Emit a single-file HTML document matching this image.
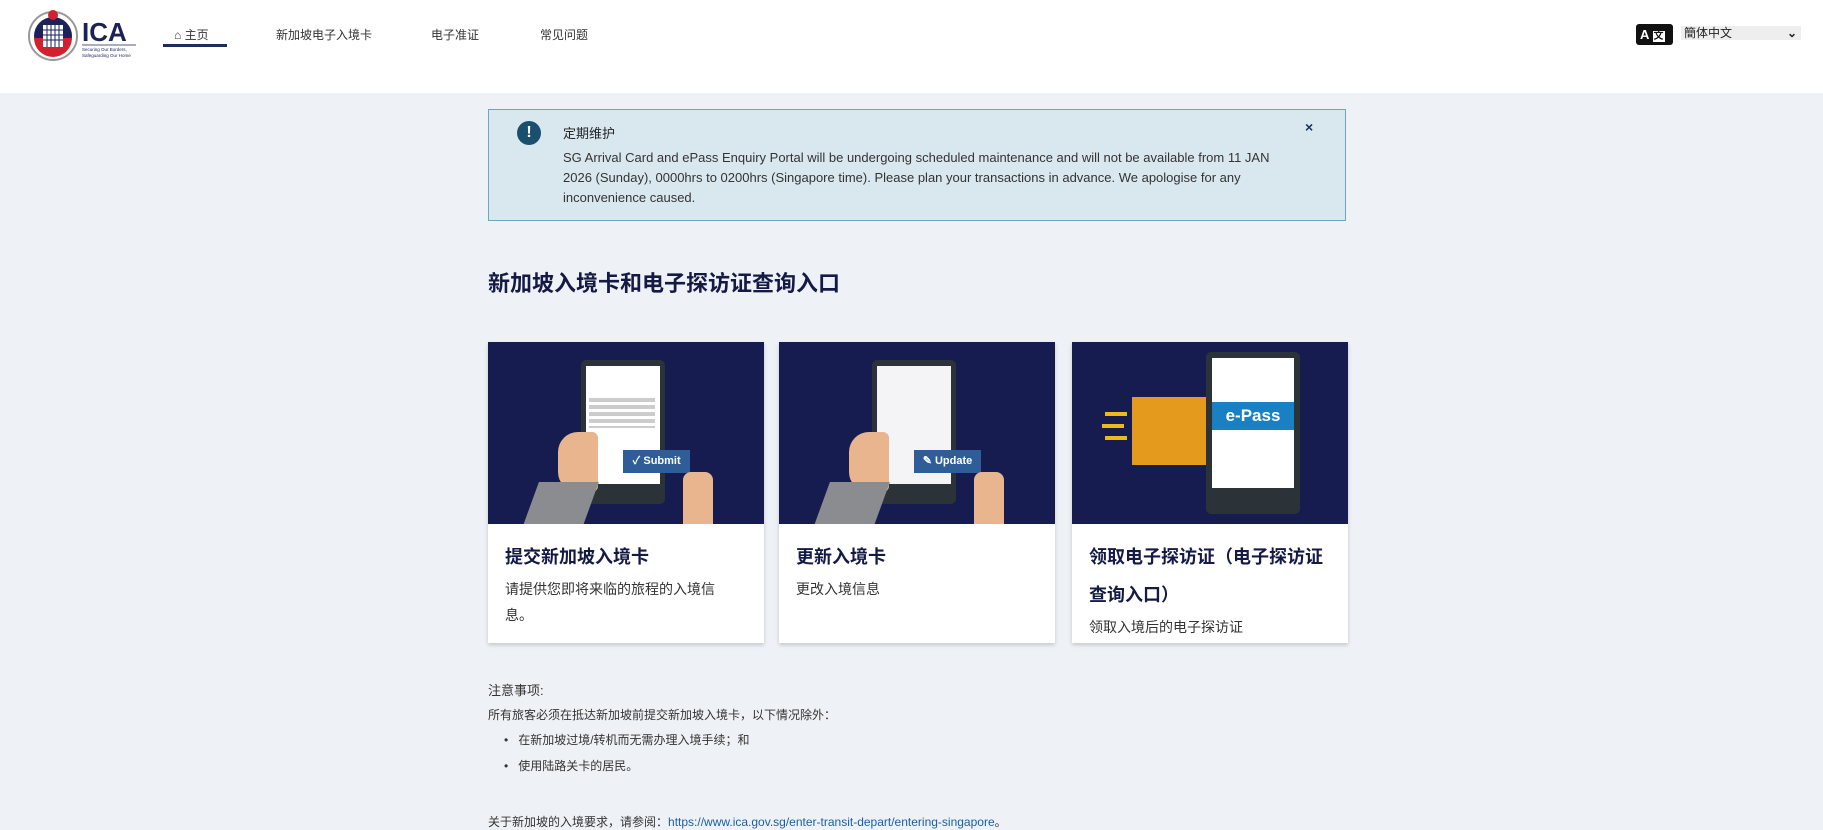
<!DOCTYPE html>
<html><head><meta charset="utf-8"><style>
*{box-sizing:border-box;margin:0;padding:0}
body{width:1823px;height:824px;overflow:hidden;background:#eef2f6;font-family:"Liberation Sans","Noto Sans CJK SC",sans-serif;color:#222;position:relative}
.hdr{position:absolute;left:0;top:0;width:1823px;height:93px;background:#fff}
.a{position:absolute}
.nav{font-size:12px;color:#333;top:26px}
.card{position:absolute;top:342px;width:276px;height:301px;background:#fff;box-shadow:0 2px 4px rgba(0,0,0,.18)}
.img{height:182px;background:#161c4f;position:relative;overflow:hidden}
.ct{font-size:18px;color:#151a45;font-weight:bold;margin:14px 17px 0;line-height:38px}
.cd{font-size:14px;color:#333;margin:0 17px;line-height:26px;width:228px}
.note{font-size:12px;color:#333}
</style></head><body>
<div class="hdr">
 <svg class="a" style="left:26px;top:8px" width="112" height="54" viewBox="0 0 112 54">
  <circle cx="27" cy="28" r="24" fill="#fff" stroke="#999" stroke-width="2"/>
  <circle cx="27" cy="28" r="19" fill="#1b2257"/>
  <path d="M8 30 A19 19 0 0 0 46 30 Z" fill="#d3202e"/>
  <rect x="17" y="17" width="20" height="22" fill="#fff"/>
  <path d="M21 17v22M25 17v22M29 17v22M33 17v22M17 22h20M17 27h20M17 32h20" stroke="#1b2257" stroke-width="1"/>
  <circle cx="27" cy="7" r="5" fill="#d3202e"/>
  <text x="56" y="33" font-family="Liberation Sans" font-weight="bold" font-size="26" fill="#1b2257">ICA</text>
  <line x1="56" y1="37" x2="110" y2="37" stroke="#1b2257" stroke-width=".7"/>
  <text x="56" y="43" font-size="4.5" fill="#1b2257">Securing Our Borders,</text>
  <text x="56" y="49" font-size="4.5" fill="#1b2257">Safeguarding Our Home</text>
 </svg>
 <div class="a nav" style="left:174px">&#8962; 主页</div>
 <div class="a" style="left:163px;top:44px;width:64px;height:3px;background:#1b2f5c"></div>
 <div class="a nav" style="left:276px">新加坡电子入境卡</div>
 <div class="a nav" style="left:431px">电子准证</div>
 <div class="a nav" style="left:540px">常见问题</div>
 <div class="a" style="left:1636px;top:24px;width:37px;height:21px;background:#111;border-radius:3px;color:#fff;font-weight:bold;font-size:13px;line-height:21px;padding-left:4px">A <span style="background:#fff;color:#111;font-size:10px;padding:0 1px">文</span></div>
 <div class="a" style="left:1681px;top:26px;width:120px;height:14px;background:#eee;font-size:12px;line-height:14px;padding-left:3px">簡体中文<span style="position:absolute;right:4px;font-weight:bold">&#8964;</span></div>
</div>

<div class="a" style="left:488px;top:109px;width:858px;height:112px;background:#d9e8ef;border:1px solid #6ba5c8">
 <div class="a" style="left:28px;top:11px;width:24px;height:24px;border-radius:50%;background:#1b4f6e;color:#fff;font-weight:bold;text-align:center;line-height:24px;font-size:16px">!</div>
 <div class="a" style="left:74px;top:13px;font-size:13px;color:#222">定期维护</div>
 <div class="a" style="left:74px;top:38px;width:720px;font-size:13px;line-height:20px;color:#333">SG Arrival Card and ePass Enquiry Portal will be undergoing scheduled maintenance and will not be available from 11 JAN 2026 (Sunday), 0000hrs to 0200hrs (Singapore time). Please plan your transactions in advance. We apologise for any inconvenience caused.</div>
 <div class="a" style="left:816px;top:9px;font-size:14px;font-weight:bold;color:#1b2f5c">×</div>
</div>

<div class="a" style="left:488px;top:266px;font-size:22px;font-weight:bold;color:#151a45">新加坡入境卡和电子探访证查询入口</div>

<div class="card" style="left:488px"><div class="img">
 <div class="a" style="left:93px;top:18px;width:84px;height:144px;background:#2b3238;border-radius:5px"><div style="margin:6px 5px;height:118px;background:#fff"></div></div>
 <div class="a" style="left:101px;top:56px;width:66px;height:30px;background:repeating-linear-gradient(#ccc 0 4px,#fff 4px 7px)"></div>
 <div class="a" style="left:135px;top:108px;width:67px;height:23px;background:#2e5d97;color:#fff;font-size:11px;font-weight:bold;line-height:23px;text-align:center">✓ Submit</div>
 <div class="a" style="left:70px;top:90px;width:40px;height:60px;background:#e8b58f;border-radius:20px 6px 6px 20px"></div>
 <div class="a" style="left:40px;top:140px;width:60px;height:60px;background:#8a8c90;transform:skewX(-20deg)"></div>
 <div class="a" style="left:195px;top:130px;width:30px;height:60px;background:#e8b58f;border-radius:8px"></div>
</div><div class="ct">提交新加坡入境卡</div><div class="cd">请提供您即将来临的旅程的入境信息。</div></div>

<div class="card" style="left:779px"><div class="img">
 <div class="a" style="left:93px;top:18px;width:84px;height:144px;background:#2b3238;border-radius:5px"><div style="margin:6px 5px;height:118px;background:#f4f4f6"></div></div>
 <div class="a" style="left:135px;top:108px;width:67px;height:23px;background:#2e5d97;color:#fff;font-size:11px;font-weight:bold;line-height:23px;text-align:center">✎ Update</div>
 <div class="a" style="left:70px;top:90px;width:40px;height:60px;background:#e8b58f;border-radius:20px 6px 6px 20px"></div>
 <div class="a" style="left:40px;top:140px;width:60px;height:60px;background:#8a8c90;transform:skewX(-20deg)"></div>
 <div class="a" style="left:195px;top:130px;width:30px;height:60px;background:#e8b58f;border-radius:8px"></div>
</div><div class="ct">更新入境卡</div><div class="cd">更改入境信息</div></div>

<div class="card" style="left:1072px"><div class="img">
 <div class="a" style="left:60px;top:55px;width:78px;height:68px;background:#e39a1d"></div>
 <div class="a" style="left:33px;top:70px;width:22px;height:4px;background:#f0b91a;box-shadow:-3px 12px 0 #f0b91a,0 24px 0 #f0b91a"></div>
 <div class="a" style="left:134px;top:10px;width:94px;height:162px;background:#2b3238;border-radius:5px"><div style="margin:6px 6px;height:130px;background:#fff"></div></div>
 <div class="a" style="left:140px;top:60px;width:82px;height:28px;background:#1a80c4;color:#fff;font-weight:bold;font-size:17px;text-align:center;line-height:28px">e-Pass</div>
</div><div class="ct">领取电子探访证（电子探访证查询入口）</div><div class="cd">领取入境后的电子探访证</div></div>

<div class="a note" style="left:488px;top:680px;font-size:13px">注意事项:</div>
<div class="a note" style="left:488px;top:706px">所有旅客必须在抵达新加坡前提交新加坡入境卡，以下情况除外：</div>
<div class="a note" style="left:504px;top:731px">•&nbsp;&nbsp;&nbsp;在新加坡过境/转机而无需办理入境手续；和</div>
<div class="a note" style="left:504px;top:757px">•&nbsp;&nbsp;&nbsp;使用陆路关卡的居民。</div>
<div class="a note" style="left:488px;top:813px">关于新加坡的入境要求，请参阅：<span style="color:#1a5fa8">https://www.ica.gov.sg/enter-transit-depart/entering-singapore</span>。</div>
</body></html>
